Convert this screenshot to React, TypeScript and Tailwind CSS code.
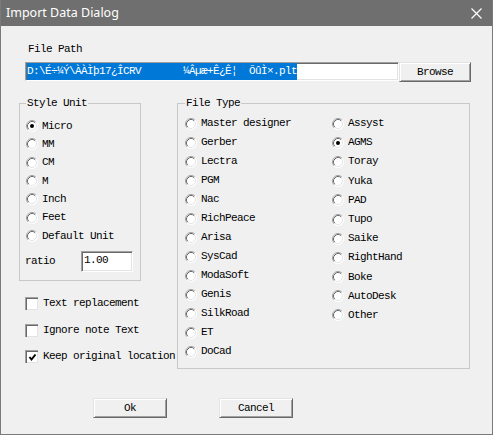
import React from 'react';

const txt = "font-['Liberation_Mono',monospace] text-[11px] leading-[13px] tracking-[-0.6px] text-black whitespace-pre";

const Radio: React.FC<{ checked?: boolean }> = ({ checked }) => (
  <svg width="12" height="12" viewBox="0 0 12 12" className="shrink-0">
    <circle cx="6" cy="6" r="5.5" fill="#fff" />
    <path d="M2.11 9.89 A5.5 5.5 0 0 1 9.89 2.11" stroke="#a0a0a0" fill="none" />
    <path d="M2.82 9.18 A4.5 4.5 0 0 1 9.18 2.82" stroke="#696969" fill="none" />
    <path d="M9.89 2.11 A5.5 5.5 0 0 1 2.11 9.89" stroke="#ffffff" fill="none" />
    <path d="M9.18 2.82 A4.5 4.5 0 0 1 2.82 9.18" stroke="#e3e3e3" fill="none" />
    {checked && <circle cx="6" cy="6" r="2" fill="#000" />}
  </svg>
);

const RadioRow: React.FC<{ label: string; checked?: boolean; h: string }> = ({ label, checked, h }) => (
  <div className={`flex items-center gap-[4px] ${h}`}>
    <Radio checked={checked} />
    <span className={txt}>{label}</span>
  </div>
);

const Check: React.FC<{ label: string; checked?: boolean }> = ({ label, checked }) => (
  <div className="flex items-center h-[13px] gap-[5px]">
    <div className="w-[13px] h-[13px] shrink-0 bg-white border-t border-l border-[#a0a0a0] border-b-white border-r-white shadow-[inset_1px_1px_#696969,inset_-1px_-1px_#e3e3e3] flex items-center justify-center">
      {checked && (
        <svg width="9" height="9" viewBox="0 0 9 9">
          <polyline points="1.5,4 3.5,6.5 7.5,1.5" stroke="#000" strokeWidth="2" fill="none" />
        </svg>
      )}
    </div>
    <span className={txt}>{label}</span>
  </div>
);

const btn =
  "flex items-center justify-center bg-[#f0f0f0] border-t border-l border-t-[#e3e3e3] border-l-[#e3e3e3] border-b border-r border-b-[#696969] border-r-[#696969] shadow-[inset_1px_1px_#ffffff,inset_-1px_-1px_#a0a0a0]";

const sunken =
  "bg-white border-t border-l border-t-[#a0a0a0] border-l-[#a0a0a0] border-b border-r border-b-white border-r-white shadow-[inset_1px_1px_#696969,inset_-1px_-1px_#e3e3e3]";

const units = ['Micro', 'MM', 'CM', 'M', 'Inch', 'Feet', 'Default Unit'];
const typesLeft = ['Master designer', 'Gerber', 'Lectra', 'PGM', 'Nac', 'RichPeace', 'Arisa', 'SysCad', 'ModaSoft', 'Genis', 'SilkRoad', 'ET', 'DoCad'];
const typesRight = ['Assyst', 'AGMS', 'Toray', 'Yuka', 'PAD', 'Tupo', 'Saike', 'RightHand', 'Boke', 'AutoDesk', 'Other'];

const path = 'D:\\É÷¼Ý\\ÀÀÌþ17¿ÎCRV       ¼Âµæ+Ê¿Ê¦  ÕûÌ×.plt';

export default function App() {
  return (
    <div className="w-[493px] h-[435px] bg-[#f0f0f0] border-x border-b border-[#7a7a7a] flex flex-col overflow-hidden">
      {/* Title bar */}
      <div className="h-[26px] shrink-0 bg-[#6f6f6f] flex items-center justify-between pl-[5px] pr-[10px]">
        <span className="font-['Noto_Sans',sans-serif] text-[12.5px] text-white">Import Data Dialog</span>
        <svg width="11" height="11" viewBox="0 0 11 11">
          <path d="M0.5 0.5 L10.5 10.5 M10.5 0.5 L0.5 10.5" stroke="#fff" strokeWidth="1.2" />
        </svg>
      </div>

      {/* File path */}
      <div className={`${txt} mt-[17px] ml-[27px]`}>File Path</div>
      <div className="flex mt-[6px] ml-[24px]">
        <div className={`${sunken} w-[374px] h-[19px] flex items-center pl-[1px]`}>
          <span className={`${txt} bg-[#0078d7] text-white h-[17px] leading-[17px]`}>{path}</span>
        </div>
        <div className={`${btn} w-[72px] h-[20px]`}>
          <span className={txt}>Browse</span>
        </div>
      </div>

      <div className="flex mt-[15px] ml-[18px]">
        {/* Left column */}
        <div className="flex flex-col w-[122px] shrink-0">
          <fieldset className="h-[184px] border border-[#c8c8c8]">
            <legend className={`${txt} ml-[6px] px-[1px]`}>Style Unit</legend>
            <div className="pt-[7px] pl-[6px] flex flex-col">
              {units.map((u, i) => (
                <RadioRow key={u} label={u} checked={i === 0} h="h-[18.33px]" />
              ))}
            </div>
            <div className="flex items-center mt-[6px] pl-[5px]">
              <span className={`${txt} w-[56px]`}>ratio</span>
              <div className={`${sunken} w-[52px] h-[21px] pl-[2px] pb-[3px] flex items-center`}>
                <span className={txt}>1.00</span>
              </div>
            </div>
          </fieldset>
          <div className="flex flex-col gap-[13.7px] mt-[16px] ml-[6px]">
            <Check label="Text replacement" />
            <Check label="Ignore note Text" />
            <Check label="Keep original location" checked />
          </div>
        </div>

        {/* File type */}
        <fieldset className="ml-[36px] w-[293px] h-[272px] border border-[#c8c8c8]">
          <legend className={`${txt} ml-[7px] px-[1px]`}>File Type</legend>
          <div className="flex pt-[4px] pl-[7px]">
            <div className="flex flex-col w-[147px]">
              {typesLeft.map(t => (
                <RadioRow key={t} label={t} h="h-[19px]" />
              ))}
            </div>
            <div className="flex flex-col">
              {typesRight.map(t => (
                <RadioRow key={t} label={t} checked={t === 'AGMS'} h="h-[19.2px]" />
              ))}
            </div>
          </div>
        </fieldset>
      </div>

      {/* Buttons */}
      <div className="flex gap-[52px] mt-[29px] ml-[92px]">
        <div className={`${btn} w-[74px] h-[20px]`}>
          <span className={txt}>Ok</span>
        </div>
        <div className={`${btn} w-[74px] h-[20px]`}>
          <span className={txt}>Cancel</span>
        </div>
      </div>
    </div>
  );
}
